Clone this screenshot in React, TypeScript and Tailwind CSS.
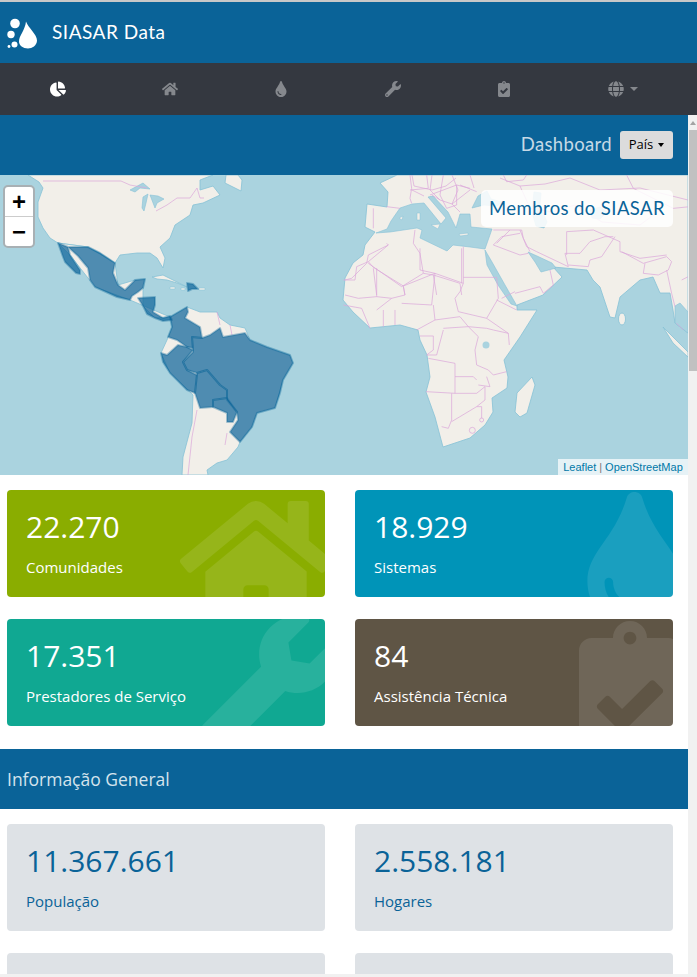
import type { ReactNode } from "react";
import { FaChartPie, FaClipboardCheck, FaGlobe, FaHome, FaTint, FaWrench } from "react-icons/fa";

const SANS = "font-['Open_Sans','Noto_Sans',sans-serif]";
const ROUND = "font-['Lato','Noto_Sans',sans-serif]";

const LAND = "#f2efe9";
const SEA = "#aad3df";
const COAST = "#86c1d6";
const BORDER = "#dba8da";

// member countries, page coordinates
const MEMBERS = [
  "M58 243 68 247 88 247 100 253 115 263 113 273 118 285 125 290 135 280 145 279 143 288 138 292 132 296 130 300 117 297 95 287 90 280 88 268 78 256 68 247 70 255 80 270 80 274 76 273 65 262 63 257Z",
  "M138 298 155 297 155 305 153 312 163 318 170 316 172 320 163 321 155 318 147 314 143 306Z",
  "M170 317 187 307 188 312 185 318 200 327 202 338 192 337 193 348 187 347 177 340 168 337 172 327Z",
  "M161 353 167 355 178 345 187 347 193 350 183 362 187 370 197 375 195 393 187 390 170 373 163 362Z",
  "M192 337 202 338 210 335 220 328 223 337 245 333 250 340 267 347 290 355 293 363 283 380 280 393 275 408 257 413 252 427 240 442 230 432 238 420 237 412 227 400 227 390 220 385 207 370 197 373 187 370 183 362 193 352Z",
  "M197 373 207 370 220 385 227 390 227 398 213 400 213 407 200 408 195 393Z",
  "M213 400 227 398 237 412 233 422 227 422 227 413 213 407Z",
  "M187 283 193 284 198 289 192 289 188 291Z",
];

const LAND_SHAPES = [
  // north america
  "M28 175 39 182 43 188 38 202 38 217 43 228 50 238 58 243 88 247 100 253 115 263 120 255 137 253 150 253 157 258 163 268 165 258 160 247 170 238 175 225 190 215 193 205 203 203 220 195 213 186 200 190 200 180 213 175Z",
  // central america and the gap at guatemala
  "M58 243 88 247 115 263 118 285 135 280 145 279 143 290 143 306 155 318 170 317 130 300 95 287 70 255Z",
  // south america
  "M170 317 187 307 200 312 217 312 220 318 230 325 245 328 250 340 267 347 290 355 293 363 283 380 275 408 257 413 252 427 240 442 238 447 227 460 217 463 207 470 208 475 182 475 183 457 192 423 193 395 170 373 161 353 167 340 172 327Z",
  // old world
  "M397 175 380 183 388 192 387 207 367 204 365 227 375 232 365 245 363 255 353 263 345 278 343 300 353 312 370 328 400 325 418 330 420 340 427 355 430 377 426 392 435 417 443 447 470 438 485 425 493 412 492 398 507 388 508 377 504 360 520 337 537 310 517 310 517 305 543 295 562 277 553 267 587 270 593 280 600 287 610 317 615 318 620 297 640 280 653 277 660 293 670 293 673 310 675 323 688 333 688 175Z",
  // islands
  "M532 377 535 385 527 413 520 417 515 412 517 393Z",
  "M663 327 688 352 688 357 673 343Z",
  "M226 175 225 183 235 188 241 191 242 180 238 175Z",
  "M152 277 163 275 173 280 187 287 177 283 167 280 157 279Z",
];

const SEAS = [
  "M376 233 387 229 391 221 400 208 412 204 424 203 441 224 446 218 428 197 433 196 448 212 456 228 460 214 470 214 471 227 492 229 485 249 470 247 453 245 447 251 420 238 422 230 417 228 390 232Z",
  "M472 208 478 196 487 191 491 199 502 202 497 206 484 205Z",
  "M534 192 541 193 540 205 547 222 544 228 536 226 532 212Z",
  "M590 210 600 207 607 212 600 219 592 218Z",
  "M528 252 537 256 552 263 556 268 541 272 535 262Z",
  "M485 250 492 262 505 285 517 306 511 304 498 285 487 265Z",
  "M675 323 675 306 680 303 688 312 688 333Z",
  // great lakes
  "M130 190 143 183 150 189 140 188 135 192Z",
  "M143 197 148 194 146 203 144 211 142 208Z",
  "M150 195 158 196 164 199 157 203 155 208Z",
];

function WorldMap() {
  return (
    <svg viewBox="0 175 688 300" className="block h-full w-full" style={{ background: SEA }}>
      <g fill={LAND} stroke={COAST} strokeWidth="0.8" strokeLinejoin="round">
        {LAND_SHAPES.map((d) => (
          <path key={d} d={d} />
        ))}
        <ellipse cx="622" cy="319" rx="3.5" ry="6" />
      </g>
      <g fill={SEA} stroke={COAST} strokeWidth="0.6">
        {SEAS.map((d) => (
          <path key={d} d={d} />
        ))}
        <circle cx="486" cy="345" r="3.5" stroke="none" />
      </g>
      <g fill={LAND} stroke={COAST} strokeWidth="0.5">
        <path d="M417 213 420 213 420 220 417 220Z" />
        <path d="M431 225 440 224 438 229Z" />
        <path d="M399 218 403 216 402 220Z" />
        <path d="M459 234 468 233 468 235 460 236Z" />
        <path d="M170 287 175 287 175 289 170 289Z" />
        <path d="M181 288 185 288 185 290 181 290Z" />
        <path d="M199 288 205 288 205 290 199 290Z" />
      </g>
      {/* borders, traced from crops so each group keeps its crop's scale */}
      <g fill="none" stroke={BORDER} strokeWidth="0.7">
        <path d="M43 181H121L130 185 147 188M156 211 167 205 177 198 190 198 197 188 200 198 204 198" />
        <path d="M197 410 192 437 188 475M227 433 225 445M217 312 220 325M230 325 232 335" />
        <path d="M412 175 414 186 432 190 446 186 456 178M432 175 430 190 440 200 452 204 470 190M452 175 458 190 452 204 460 212M412 190 424 196M470 175 474 188M440 200 432 195" />
        <path d="M500 178 520 186 545 184 570 178 600 190 640 188 688 200M520 186 530 208 552 212 575 205 602 222 640 225 660 210" />
        <g transform="translate(320 230) scale(.3333)" strokeWidth="2.2">
          <path d="M70 150H105L110 110 145 95 205 45M145 95 160 112 250 168 345 130 430 160V50M300 55V120L345 130M430 142H530M430 160 420 185 405 205 415 245 500 265M250 168 255 195 215 205 170 200V115M75 195 115 205 170 200M70 225 125 235 150 295M190 240V290M225 240V285M170 240 215 205M245 220 335 225 345 130M340 225 345 270 290 300M345 270 420 260 445 290 500 295 520 300 565 310M530 142 535 205 500 265M530 210 590 240M500 265 565 310 568 345M370 300 350 375 320 375M300 318H340V360L320 375M370 295 445 290 475 320 465 360 470 405 505 420 520 435 560 425M325 385 405 400V440H460L470 450M405 440V490L318 485M405 490H470L495 470V510L470 530H485V565M395 490V570L385 595 365 590M395 575 470 530M500 440 510 470 475 465M520 45 600 75 625 70M520 45 545 20 600 10M585 190 660 170 670 190 700 165 690 120M545 205 585 185M600 0 620 50 650 65 745 110 735 70H780L810 35 855 20H880M745 105 805 110 810 90 845 80 885 20M905 65 970 100 1040 80 1055 95 1045 120 1015 135 970 130 975 100M1040 120 1055 190 1065 230M1085 150 1105 140M1070 280 1090 300" />
          <circle cx="457" cy="601" r="9" />
          <circle cx="485" cy="570" r="6" />
        </g>
        <g transform="translate(230 175) scale(.3333)" strokeWidth="2.2">
          <path d="M540 0 545 40 540 70 545 85M470 95 510 100M430 100V160M590 0 595 40 540 45M600 60 680 30 720 40M640 0 630 60 650 100M680 30V90L650 100M470 205 475 210 415 240 410 265 365 310 345 315M415 265 515 335 580 295 570 235 550 205 555 165M430 280 440 360M520 335 525 360M580 295 610 300 690 325 695 360M695 220V325M610 300 620 360" />
        </g>
        <g transform="translate(460 175) scale(.3333)" strokeWidth="2.2">
          <path d="M130 0 140 20 190 15 200 0M0 30 50 50M100 165H185L190 190 210 230M110 205 150 165M320 170V240M320 170 400 165 480 200V230L540 250 620 240M500 0 520 40 640 100 690 95" />
        </g>
      </g>
      <g fill="#0a6398" fillOpacity="0.7" stroke="#0a6398" strokeOpacity="0.35" strokeWidth="2" strokeLinejoin="round">
        {MEMBERS.map((d) => (
          <path key={d} d={d} />
        ))}
      </g>
    </svg>
  );
}

function Logo() {
  return (
    <svg viewBox="1 7.5 40 50" className="h-[50px] w-[40px] shrink-0 fill-white">
      <path d="M26 21C28 27 37 34 37 40 37 45 32 48 28 48 23 48 19 45 19 41 19 35 25 30 26 21Z" />
      <circle cx="15" cy="23" r="4.8" />
      <circle cx="11" cy="34" r="3.7" />
      <circle cx="14.5" cy="44" r="3" />
      <circle cx="9" cy="46" r="1.4" />
    </svg>
  );
}

interface StatCardProps {
  value: string;
  label: string;
  className: string;
  icon?: ReactNode;
}

function StatCard({ value, label, className, icon }: StatCardProps) {
  return (
    <div className={`relative h-[107px] overflow-hidden rounded-[4px] px-[19px] pt-[19px] ${className}`}>
      <div className="text-[30px] leading-[35px]">{value}</div>
      <div className="mt-[13px] text-[15px] leading-[21px]">{label}</div>
      {icon}
    </div>
  );
}

const NAV_ICONS = [FaHome, FaTint, FaWrench, FaClipboardCheck];

export default function App() {
  return (
    <div className={`flex h-[977px] w-[697px] flex-col overflow-hidden bg-white ${SANS}`}>
      <div className="h-[2px] shrink-0 bg-[#c8c8c8]" />
      <header className="flex h-[61px] shrink-0 items-center bg-[#0a6398] pl-[1px] text-white">
        <Logo />
        <span className={`ml-[11px] text-[19px] tracking-[.5px] ${ROUND}`}>SIASAR Data</span>
      </header>
      <nav className="grid h-[52px] shrink-0 grid-cols-[repeat(5,111.5px)_1fr] items-center bg-[#343840] pl-[2.5px] pr-[11px] text-[16px] text-[#85888d]">
        <FaChartPie className="justify-self-center text-white" />
        {NAV_ICONS.map((Icon, i) => (
          <Icon key={i} className="justify-self-center" />
        ))}
        <div className="flex items-center justify-center gap-[6px]">
          <FaGlobe />
          <span className="h-0 w-0 border-x-[4px] border-t-[4px] border-x-transparent border-t-[#85888d]" />
        </div>
      </nav>

      <div className="flex min-h-0 flex-1">
        <main className="min-w-0 flex-1 overflow-hidden">
          <div className="flex h-[60px] items-center justify-end gap-2 bg-[#0a6398] pr-[15px]">
            <span className={`text-[18.5px] tracking-[.35px] text-[#c5d9e6] ${ROUND}`}>Dashboard</span>
            <button className="flex h-[28px] w-[53px] items-center justify-center gap-[5px] rounded-[3px] bg-[#dcdcdc] text-[13px] text-black">
              País
              <span className="h-0 w-0 border-x-[3.5px] border-t-[4px] border-x-transparent border-t-black" />
            </button>
          </div>

          <div className="relative h-[300px]">
            <WorldMap />
            <div className="absolute left-[3px] top-[10px] w-[32px] overflow-hidden rounded-[5px] border-2 border-[#a8b0b4] bg-white text-black">
              <div className="flex h-[30px] items-center justify-center border-b border-[#ccc] font-['Liberation_Sans',sans-serif] text-[24px] font-bold">+</div>
              <div className="flex h-[29px] items-center justify-center font-['Liberation_Sans',sans-serif] text-[24px] font-bold">−</div>
            </div>
            <div className={`absolute right-[15px] top-[15px] flex h-[37px] w-[192px] items-center justify-center rounded-[5px] bg-white/85 text-[18.5px] tracking-[.4px] text-[#0a6398] ${ROUND}`}>
              Membros do SIASAR
            </div>
            <div className="absolute bottom-0 right-0 flex h-[16px] w-[130px] items-center justify-center bg-white/70 font-['Liberation_Sans',sans-serif] text-[11px] text-[#0078a8]">
              Leaflet<span className="mx-[3px] text-[#777]">|</span>OpenStreetMap
            </div>
          </div>

          <section className="grid grid-cols-2 gap-x-[30px] gap-y-[22px] pb-[23px] pl-[7px] pr-[15px] pt-[15px] text-white">
            <StatCard
              value="22.270"
              label="Comunidades"
              className="bg-[#8aad00]"
              icon={<FaHome className="absolute right-[-7px] top-[-6px] text-[152px] text-white/10" />}
            />
            <StatCard
              value="18.929"
              label="Sistemas"
              className="bg-[#0094b8]"
              icon={<FaTint className="absolute right-[-30px] top-[2px] text-[137px] text-white/10" />}
            />
            <StatCard
              value="17.351"
              label="Prestadores de Serviço"
              className="bg-[#10a892]"
              icon={<FaWrench className="absolute right-[-11px] top-[-3px] text-[137px] text-white/10" />}
            />
            <StatCard
              value="84"
              label="Assistência Técnica"
              className="bg-[#5f5545]"
              icon={<FaClipboardCheck className="absolute right-[-25px] top-[2px] text-[136px] text-white/10" />}
            />
          </section>

          <div className="flex h-[60px] items-center bg-[#0a6398] pl-[7px] text-[17.5px] text-[#d5e3ed]">Informação General</div>

          <section className="grid grid-cols-2 gap-x-[30px] gap-y-[22px] pl-[7px] pr-[15px] pt-[15px] text-[#0a6398]">
            <StatCard value="11.367.661" label="População" className="bg-[#dee2e6]" />
            <StatCard value="2.558.181" label="Hogares" className="bg-[#dee2e6]" />
            <StatCard value="" label="" className="bg-[#dee2e6]" />
            <StatCard value="" label="" className="bg-[#dee2e6]" />
          </section>
        </main>

        <div className="relative w-[9px] shrink-0 bg-[#f1f1f1]">
          <span className="absolute left-[2px] top-[6px] h-0 w-0 border-x-[3px] border-b-[4px] border-x-transparent border-b-[#a3a3a3]" />
          <div className="absolute left-[1px] right-0 top-[15px] h-[241px] bg-[#c1c1c1]" />
        </div>
      </div>
      <div className="h-[3px] shrink-0 bg-[#f1f1f1]" />
    </div>
  );
}
